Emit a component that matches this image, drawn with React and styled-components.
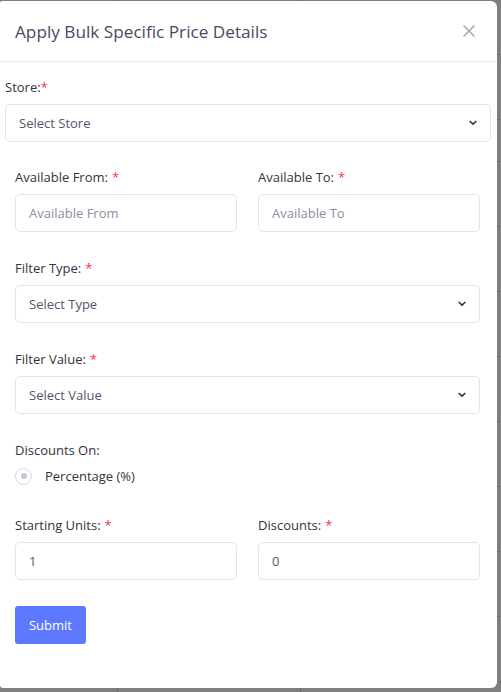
import React from "react";
import styled, { createGlobalStyle } from "styled-components";

const Global = createGlobalStyle`
  html, body { margin: 0; padding: 0; }
  body {
    width: 501px;
    height: 692px;
    overflow: hidden;
    background-color: #7f7f7f;
    background-image:
      linear-gradient(to right, transparent 117px, #6b6b6b 117px, #6b6b6b 118px, transparent 118px, transparent 300px, #6b6b6b 300px, #6b6b6b 301px, transparent 301px),
      repeating-linear-gradient(to bottom, transparent 0, transparent 31px, #6e6e6e 31px, #6e6e6e 32px, transparent 32px, transparent 65px);
    background-position: 0 0, 0 130px;
    font-family: "Open Sans", "Noto Sans", sans-serif;
  }
`;

const Modal = styled.div`
  width: 497px;
  height: 687px;
  margin-top: 1px;
  background: #fff;
  border-radius: 2px 6px 6px 3px;
  box-sizing: border-box;
  display: flex;
  flex-direction: column;
`;

const Header = styled.div`
  height: 61px;
  box-sizing: border-box;
  border-bottom: 1px solid #e9eaf0;
  display: flex;
  align-items: center;
  justify-content: space-between;
  padding: 0 21px 0 15px;
`;

const Title = styled.h5`
  margin: 0;
  font-size: 17.2px;
  font-weight: 400;
  color: #4a4b5f;
`;

const Close = styled.button`
  border: 0;
  background: none;
  padding: 0;
  width: 14px;
  height: 14px;
  display: flex;
  cursor: pointer;
`;

const Body = styled.form`
  padding: 15px 17px 0 15px;
  display: flex;
  flex-direction: column;
`;

const Group = styled.div`
  display: flex;
  flex-direction: column;
  margin: ${(p) => (p.$wide ? "0 -11px 0 -10px" : "0")};
  margin-bottom: ${(p) => p.$mb ?? 26}px;
`;

const Row = styled.div`
  display: grid;
  grid-template-columns: 1fr 1fr;
  column-gap: 21px;
  margin-bottom: ${(p) => p.$mb ?? 26}px;
`;

const Label = styled.label`
  font-size: 13px;
  line-height: 20px;
  color: #333340;
  margin-bottom: 7px;
  display: block;
`;

const Req = styled.span`
  color: #f5333f;
  margin-left: ${(p) => (p.$tight ? "0" : "4px")};
`;

const Field = styled.div`
  height: 38px;
  box-sizing: border-box;
  border: 1px solid #e3e4ee;
  border-radius: 5px;
  display: flex;
  align-items: center;
  justify-content: space-between;
  padding: 0 13px 0 13px;
  font-size: 13px;
  color: ${(p) => p.$color || "#8b8ea3"};
`;

const Chevron = () => (
  <svg width="8" height="6" viewBox="0 0 8 6">
    <path d="M1.2 1.5 L4 4.2 L6.8 1.5" fill="none" stroke="#363744" strokeWidth="1.7" strokeLinecap="round" strokeLinejoin="round" />
  </svg>
);

const RadioRow = styled.div`
  display: flex;
  align-items: center;
  gap: 13px;
  font-size: 13px;
  color: #333340;
  margin-bottom: 30px;
`;

const RadioCircle = styled.span`
  width: 17px;
  height: 17px;
  box-sizing: border-box;
  border: 1px solid #d4d6e4;
  border-radius: 50%;
  display: flex;
  align-items: center;
  justify-content: center;
  &::after {
    content: "";
    width: 6px;
    height: 6px;
    border-radius: 50%;
    background: #c3c6d6;
  }
`;

const Submit = styled.button`
  width: 71px;
  height: 38px;
  border: 0;
  border-radius: 3px;
  background: #5e77ff;
  color: #fff;
  font-family: inherit;
  font-size: 13px;
  padding: 0;
  cursor: pointer;
`;

const Select = ({ children, color }) => (
  <Field $color={color}>
    <span>{children}</span>
    <Chevron />
  </Field>
);

export default function App() {
  return (
    <>
      <Global />
      <Modal>
        <Header>
          <Title>Apply Bulk Specific Price Details</Title>
          <Close aria-label="Close">
            <svg width="14" height="14" viewBox="0 0 14 14">
              <path d="M2 2 L12 12 M12 2 L2 12" stroke="#a3a5b1" strokeWidth="1.5" strokeLinecap="round" />
            </svg>
          </Close>
        </Header>
        <Body>
          <Group $wide $mb={25}>
            <Label>Store:<Req $tight>*</Req></Label>
            <Select color="#55566a">Select Store</Select>
          </Group>
          <Row>
            <div>
              <Label>Available From:<Req>*</Req></Label>
              <Field>Available From</Field>
            </div>
            <div>
              <Label>Available To:<Req>*</Req></Label>
              <Field>Available To</Field>
            </div>
          </Row>
          <Group>
            <Label>Filter Type:<Req>*</Req></Label>
            <Select color="#55566a">Select Type</Select>
          </Group>
          <Group>
            <Label>Filter Value:<Req>*</Req></Label>
            <Select color="#55566a">Select Value</Select>
          </Group>
          <Group $mb={0}>
            <Label>Discounts On:</Label>
            <RadioRow>
              <RadioCircle />
              <span>Percentage (%)</span>
            </RadioRow>
          </Group>
          <Row>
            <div>
              <Label>Starting Units:<Req>*</Req></Label>
              <Field $color="#55566a">1</Field>
            </div>
            <div>
              <Label>Discounts:<Req>*</Req></Label>
              <Field $color="#55566a">0</Field>
            </div>
          </Row>
          <div>
            <Submit type="button">Submit</Submit>
          </div>
        </Body>
      </Modal>
    </>
  );
}
